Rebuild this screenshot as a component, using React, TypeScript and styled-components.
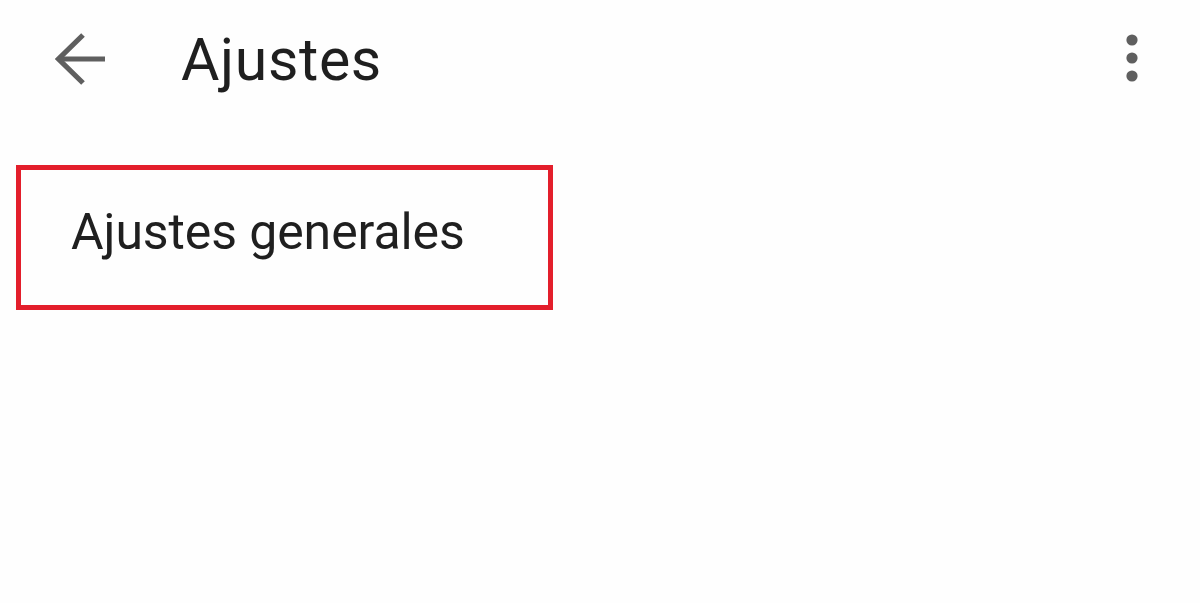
import styled, { createGlobalStyle } from "styled-components";

const GlobalStyle = createGlobalStyle`
  html, body {
    margin: 0;
    padding: 0;
    background: #fefefe;
  }
  body {
    font-family: Roboto, "Liberation Sans", sans-serif;
    color: #1f1f1f;
  }
`;

const Page = styled.div`
  width: 1200px;
  height: 603px;
  background: #fefefe;
  overflow: hidden;
`;

const TopBar = styled.header`
  display: flex;
  align-items: center;
  height: 118px;
  padding: 0 62px 0 55px;
`;

const IconButton = styled.button`
  display: flex;
  align-items: center;
  justify-content: center;
  padding: 0;
  border: none;
  background: transparent;
  color: #5f5f5f;
`;

const Title = styled.h1`
  margin: 0 0 0 74px;
  font-size: 59px;
  font-weight: 400;
  letter-spacing: 0.6px;
  line-height: normal;
  color: #1f1f1f;
`;

const MenuButton = styled(IconButton)`
  margin-left: auto;
`;

const Highlight = styled.div`
  margin: 47px 0 0 16px;
  width: 537px;
  height: 145px;
  box-sizing: border-box;
  border: 5px solid #e31e2b;
  padding: 33px 0 0 50px;
`;

const ItemLabel = styled.span`
  font-size: 50px;
  letter-spacing: -0.1px;
  line-height: normal;
  color: #1f1f1f;
`;

function BackArrow() {
  return (
    <svg width="52" height="52" viewBox="0 0 52 52" fill="none">
      <polyline points="28,2 3.5,26 28,50" stroke="currentColor" strokeWidth="5.2" strokeLinejoin="miter" />
      <line x1="4" y1="26" x2="50" y2="26" stroke="currentColor" strokeWidth="5.2" />
    </svg>
  );
}

function MoreVert() {
  return (
    <svg width="12" height="50" viewBox="0 0 12 50" fill="currentColor">
      <circle cx="6" cy="6" r="5.6" />
      <circle cx="6" cy="24" r="5.6" />
      <circle cx="6" cy="42" r="5.6" />
    </svg>
  );
}

export default function App() {
  return (
    <>
      <GlobalStyle />
      <Page>
        <TopBar>
          <IconButton aria-label="Atrás">
            <BackArrow />
          </IconButton>
          <Title>Ajustes</Title>
          <MenuButton aria-label="Más opciones">
            <MoreVert />
          </MenuButton>
        </TopBar>
        <Highlight>
          <ItemLabel>Ajustes generales</ItemLabel>
        </Highlight>
      </Page>
    </>
  );
}
